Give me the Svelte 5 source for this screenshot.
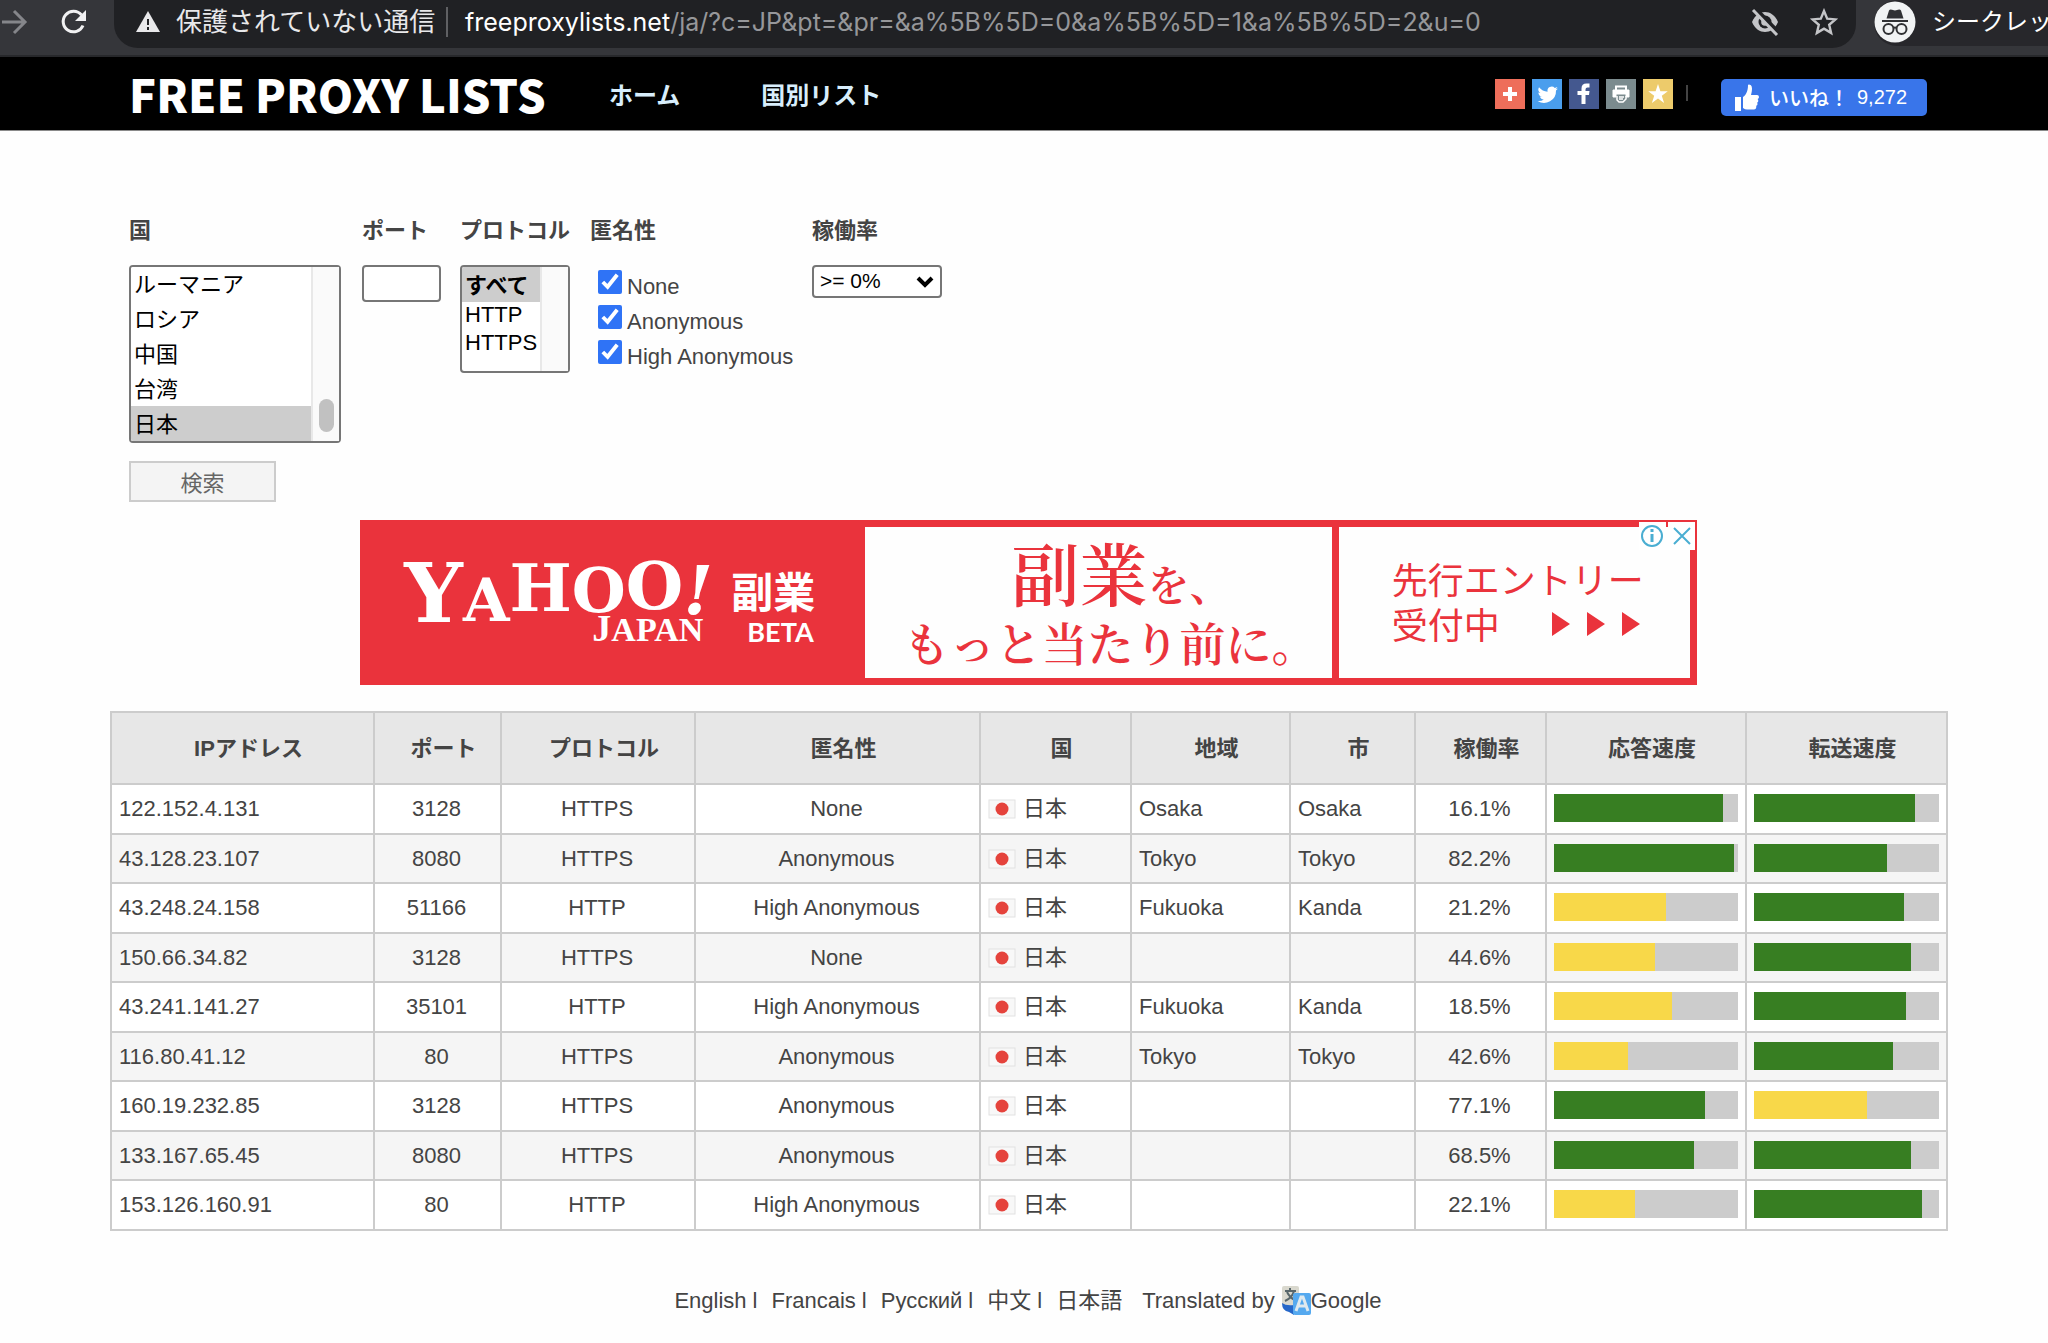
<script>
  import { onMount } from "svelte";

  const countries = [
    "すべて",
    "アメリカ",
    "アルゼンチン",
    "イギリス",
    "イタリア",
    "イラン",
    "インド",
    "インドネシア",
    "ウクライナ",
    "エジプト",
    "オランダ",
    "カナダ",
    "コロンビア",
    "シンガポール",
    "スペイン",
    "タイ",
    "チリ",
    "ドイツ",
    "トルコ",
    "ブラジル",
    "フランス",
    "ベトナム",
    "ルーマニア",
    "ロシア",
    "中国",
    "台湾",
    "日本",
    "韓国"
  ];

  const levels = ["None", "Anonymous", "High Anonymous"];

  const headings = [
    "IPアドレス",
    "ポート",
    "プロトコル",
    "匿名性",
    "国",
    "地域",
    "市",
    "稼働率",
    "応答速度",
    "転送速度"
  ];

  const columns = [263, 127, 194, 285, 151, 159, 125, 131, 200, 201];

  const proxies = [
    { ip: "122.152.4.131", port: 3128, protocol: "HTTPS", level: "None", region: "Osaka", city: "Osaka", uptime: "16.1%", response: 92, transfer: 87 },
    { ip: "43.128.23.107", port: 8080, protocol: "HTTPS", level: "Anonymous", region: "Tokyo", city: "Tokyo", uptime: "82.2%", response: 98, transfer: 72 },
    { ip: "43.248.24.158", port: 51166, protocol: "HTTP", level: "High Anonymous", region: "Fukuoka", city: "Kanda", uptime: "21.2%", response: 61, transfer: 81 },
    { ip: "150.66.34.82", port: 3128, protocol: "HTTPS", level: "None", region: "", city: "", uptime: "44.6%", response: 55, transfer: 85 },
    { ip: "43.241.141.27", port: 35101, protocol: "HTTP", level: "High Anonymous", region: "Fukuoka", city: "Kanda", uptime: "18.5%", response: 64, transfer: 82 },
    { ip: "116.80.41.12", port: 80, protocol: "HTTPS", level: "Anonymous", region: "Tokyo", city: "Tokyo", uptime: "42.6%", response: 40, transfer: 75 },
    { ip: "160.19.232.85", port: 3128, protocol: "HTTPS", level: "Anonymous", region: "", city: "", uptime: "77.1%", response: 82, transfer: 61 },
    { ip: "133.167.65.45", port: 8080, protocol: "HTTPS", level: "Anonymous", region: "", city: "", uptime: "68.5%", response: 76, transfer: 85 },
    { ip: "153.126.160.91", port: 80, protocol: "HTTP", level: "High Anonymous", region: "", city: "", uptime: "22.1%", response: 44, transfer: 91 }
  ];

  const languages = ["English", "Francais", "Русский", "中文", "日本語"];

  let countryList;
  let country = ["日本"];
  let protocol = [""];
  let checked = [...levels];

  // keep the chosen country on the last visible line
  onMount(() => {
    const rowHeight = 35;
    countryList.scrollTop = (countries.indexOf("日本") - 4) * rowHeight;
  });
</script>

<div class="browser">
  <button class="tool forward" type="button" aria-label="進む">
    <svg width="28" height="28" viewBox="0 0 28 28">
      <path d="M2 14h22M14 3l11 11-11 11" fill="none" stroke="#85868a" stroke-width="3" />
    </svg>
  </button>
  <button class="tool reload" type="button" aria-label="再読み込み">
    <svg width="28" height="28" viewBox="0 0 28 28">
      <path d="M23 17.500A10.300 10.300 0 1 1 21.500 7" fill="none" stroke="#f1f1f2" stroke-width="3" />
      <path d="M26 2v11H15z" fill="#f1f1f2" />
    </svg>
  </button>
  <div class="address">
    <svg class="warning" width="24" height="22" viewBox="0 0 24 22">
      <path d="M12 0l12 21H0z" fill="#e8e8ea" />
      <path d="M12 8v6M12 16v3" stroke="#202124" stroke-width="2" />
    </svg>
    <span class="insecure">保護されていない通信</span>
    <span class="url"><b>freeproxylists.net</b>/ja/?c=JP&pt=&pr=&a%5B%5D=0&a%5B%5D=1&a%5B%5D=2&u=0</span>
    <svg class="eye" width="28" height="28" viewBox="0 0 28 28">
      <path d="M1 14C4 7 9 4 14 4s10 3 13 10c-3 7-8 10-13 10S4 21 1 14z" fill="#c4c5c8" />
      <circle cx="14" cy="14" r="6.500" fill="#202124" />
      <circle cx="14" cy="14" r="3.800" fill="#c4c5c8" />
      <path d="M4 0l24 25" stroke="#202124" stroke-width="4" />
      <path d="M2 2l24 25" stroke="#c4c5c8" stroke-width="3" />
    </svg>
    <svg width="28" height="28" viewBox="0 0 28 28">
      <path d="M14 3l3.200 7.700 8.300.700-6.300 5.400 1.900 8.100-7.100-4.300-7.100 4.300 1.900-8.100-6.300-5.400 8.300-.700z" fill="none" stroke="#c4c5c8" stroke-width="2.400" />
    </svg>
  </div>
  <div class="profile">
    <svg width="42" height="42" viewBox="0 0 42 42">
      <circle cx="21" cy="21" r="20.500" fill="#f1f3f4" />
      <path d="M15 9.500q1-1.500 3-.700l3 .700 3-.700q2-.800 3 .700l2.500 8h-17z" fill="#303134" />
      <path d="M8 20h26" stroke="#303134" stroke-width="2" />
      <g fill="none" stroke="#303134" stroke-width="2">
        <circle cx="14.500" cy="28" r="5" />
        <circle cx="27.500" cy="28" r="5" />
        <path d="M19.500 27q1.500-1 3 0" />
      </g>
    </svg>
    <span>シークレット</span>
  </div>
</div>

<header>
  <a class="logo" href="/ja/">FREE PROXY LISTS</a>
  <nav>
    <a href="/ja/">ホーム</a>
    <a href="/ja/countries">国別リスト</a>
  </nav>
  <div class="share">
    <a class="more" href="/share" aria-label="共有">
      <svg viewBox="0 0 30 30"><path d="M15 8v14M8 15h14" stroke="#fff" stroke-width="4" /></svg>
    </a>
    <a class="twitter" href="/twitter" aria-label="Twitter">
      <svg viewBox="0 0 30 30">
        <path d="M26 9.500a9 9 0 0 1-2.400.700 4 4 0 0 0 1.800-2.300 8 8 0 0 1-2.600 1 4.200 4.200 0 0 0-7.200 3.800A12 12 0 0 1 7 8.300a4.200 4.200 0 0 0 1.300 5.600 4 4 0 0 1-1.900-.5c0 2 1.400 3.800 3.400 4.200q-1 .2-1.900 0a4.200 4.200 0 0 0 3.900 2.900A8.500 8.500 0 0 1 5.600 22a12 12 0 0 0 18.400-10.600 8 8 0 0 0 2-1.900z" fill="#fff" />
      </svg>
    </a>
    <a class="facebook" href="/facebook" aria-label="Facebook">
      <svg viewBox="0 0 30 30">
        <path d="M12.500 25v-9H8.500v-4h4V9.500q0-5 5-5h3v4h-2q-2 0-2 2V12h4l-.5 4h-3.500v9z" fill="#fff" />
      </svg>
    </a>
    <a class="print" href="/print" aria-label="印刷">
      <svg viewBox="0 0 30 30" fill="none" stroke="#fff" stroke-width="2">
        <path d="M10 11V7.500h10V11" />
        <path d="M7 11h16v7h-3v-3H10v3H7z" fill="#fff" stroke-width="1" />
        <path d="M11 17v4l2 2h4l3-3v-3M13 18h5M13 20h4" stroke-width="1.500" />
      </svg>
    </a>
    <a class="favorite" href="/favorite" aria-label="お気に入り">
      <svg viewBox="0 0 30 30">
        <path d="M15 5l2.400 7.200h7.400l-6 4.500 2.300 7.300-6.100-4.500L8.900 24l2.300-7.300-6-4.500h7.400z" fill="#fff" />
      </svg>
    </a>
  </div>
  <button class="like" type="button">
    <svg width="24" height="28" viewBox="0 0 24 28" fill="#fff">
      <path d="M0 13h6v14H0zM8 13c3-2 5-6 5-12 0-1 4-1 4 3.500 0 2.500-.5 4.500-1 6.500h6c2.500 0 2.500 3.500.5 4 1.200.8 1 3.200-.5 3.600.9 1.200.4 3-.8 3.200.4 2-.4 3.700-2.200 3.700H12q-2 0-4-1.500z" />
    </svg>
    <span>いいね！</span>
    <span>9,272</span>
  </button>
</header>

<main>
  <form on:submit|preventDefault>
    <div class="filters">
      <div class="field country">
        <label for="country">国</label>
        <div class="listbox">
          <select id="country" size="5" multiple bind:this={countryList} bind:value={country}>
            {#each countries as name}
              <option value={name}>{name}</option>
            {/each}
          </select>
          <div class="scrollbar"><i></i></div>
        </div>
      </div>
      <div class="field port">
        <label for="port">ポート</label>
        <input id="port" type="text" />
      </div>
      <div class="field protocol">
        <label for="protocol">プロトコル</label>
        <div class="listbox">
          <select id="protocol" size="4" multiple bind:value={protocol}>
            <option class="all" value="">すべて</option>
            <option value="HTTP">HTTP</option>
            <option value="HTTPS">HTTPS</option>
          </select>
          <div class="scrollbar"></div>
        </div>
      </div>
      <fieldset class="field level">
        <legend>匿名性</legend>
        {#each levels as level}
          <label>
            <input type="checkbox" value={level} bind:group={checked} />
            <span>{level}</span>
          </label>
        {/each}
      </fieldset>
      <div class="field uptime">
        <label for="uptime">稼働率</label>
        <select id="uptime">
          <option>&gt;= 0%</option>
          <option>&gt;= 50%</option>
          <option>&gt;= 90%</option>
        </select>
      </div>
    </div>
    <button class="search" type="submit">検索</button>
  </form>

  <section class="banner">
    <svg class="yahoo" viewBox="0 0 503 165" fill="#fff">
      <text class="serif" x="43" y="102">
        <tspan font-size="82">Y</tspan><tspan y="101" font-size="60">A</tspan><tspan y="91" font-size="66">H</tspan><tspan y="92" font-size="62">O</tspan><tspan y="89" font-size="66">O</tspan><tspan y="94" font-size="68" font-style="italic">!</tspan>
      </text>
      <text class="japan" x="231" y="121">
        <tspan font-size="38">J</tspan><tspan font-size="34">APAN</tspan>
      </text>
      <text class="sans" x="370" y="88" font-size="42">副業</text>
      <text class="sans" x="386" y="122" font-size="27">BETA</text>
    </svg>
    <div class="panel copy">
      <p class="first"><span>副業</span>を、</p>
      <p class="second">もっと当たり前に。</p>
    </div>
    <div class="panel entry">
      <p>先行エントリー</p>
      <p>
        受付中
        <svg width="88" height="24" viewBox="0 0 88 24" fill="#ea333c">
          <path d="M0 0l18 12L0 24zM35 0l18 12-18 12zM70 0l18 12-18 12z" />
        </svg>
      </p>
    </div>
    <div class="adchoices">
      <svg width="56" height="28" viewBox="0 0 56 28" fill="none" stroke="#4aaed2" stroke-width="2">
        <path d="M28 0v5" stroke="#ea333c" />
        <circle cx="13" cy="14" r="10" />
        <path d="M13 12v8M13 7v3" stroke-width="3" />
        <path d="M35 6l16 16M51 6L35 22" />
      </svg>
    </div>
  </section>

  <table>
    <colgroup>
      {#each columns as width}
        <col style="width: {width}px" />
      {/each}
    </colgroup>
    <thead>
      <tr>
        {#each headings as heading}
          <th scope="col">{heading}</th>
        {/each}
      </tr>
    </thead>
    <tbody>
      {#each proxies as proxy}
        <tr>
          <td>{proxy.ip}</td>
          <td class="center">{proxy.port}</td>
          <td class="center">{proxy.protocol}</td>
          <td class="center">{proxy.level}</td>
          <td>
            <div class="nation">
              <svg width="28" height="20" viewBox="0 0 28 20">
                <rect x="1" y="1" width="26" height="18" fill="#f8f8f8" stroke="#e2e2e2" />
                <circle cx="14" cy="10" r="6.500" fill="#e5433c" />
              </svg>
              日本
            </div>
          </td>
          <td>{proxy.region}</td>
          <td>{proxy.city}</td>
          <td class="center">{proxy.uptime}</td>
          {#each [proxy.response, proxy.transfer] as speed}
            <td>
              <div class="bar">
                <div class:slow={speed < 70} style="width: {speed}%"></div>
              </div>
            </td>
          {/each}
        </tr>
      {/each}
    </tbody>
  </table>
</main>

<footer>
  {#each languages as language, i}
    <a href="/{i}">{language}</a>
    {#if i < languages.length - 1}<span class="separator">l</span>{/if}
  {/each}
  <span class="translated">Translated by</span>
  <svg width="30" height="30" viewBox="0 0 30 30">
    <rect x="1" y="0" width="17" height="20" rx="2" fill="#d9d8ce" />
    <path d="M4 5h11M9 2v3M13 5q-2 7-9 10M6 6q3 6 8 8" fill="none" stroke="#58666b" stroke-width="2" />
    <path d="M1 17q4 3 12 2v10L8 26q-7-1-7-9z" fill="#2667c9" />
    <rect x="12" y="7" width="18" height="22" rx="2" fill="#55a9ef" />
    <path d="M15 25l5-14h2l5 14M17 20h8" fill="none" stroke="#dfe9ee" stroke-width="3" />
  </svg>
  <a href="/google">Google</a>
</footer>

<style>
  :global(body) {
    margin: 0;
    background-color: #fefefe;
    color: #444;
    font-family: "Liberation Sans", "Noto Sans CJK JP", sans-serif;
    font-size: 22px;
    overflow-x: hidden;
  }
  * {
    box-sizing: border-box;
  }
  a {
    color: inherit;
    text-decoration: none;
  }
  p {
    margin: 0;
  }
  svg {
    display: block;
    flex: none;
  }
  button,
  input,
  select {
    font: inherit;
    margin: 0;
  }

  .browser {
    display: flex;
    height: 57px;
    background-color: #35363a;
    border-bottom: 2px solid #27282b;
    font-family: Inter, "Noto Sans CJK JP", sans-serif;
    font-size: 25px;
    overflow: hidden;
    white-space: nowrap;
  }
  .tool {
    display: flex;
    height: 44px;
    align-items: center;
    padding: 0;
    border: none;
    background: none;
  }
  .reload {
    margin: 0 26px 0 32px;
  }
  .address {
    flex: 1;
    display: flex;
    align-items: center;
    height: 48px;
    padding: 0 18px 4px 22px;
    background-color: #202124;
    border-radius: 0 0 24px 24px;
  }
  .insecure {
    width: 255px;
    color: #e8e8ea;
    font-size: 26px;
    line-height: 30px;
    margin: 0 15px 0 16px;
  }
  .url {
    flex: 1;
    padding-left: 17px;
    border-left: 2px solid #5f6063;
    line-height: 30px;
    color: #96979a;
  }
  .url b {
    color: #fff;
    font-weight: 400;
  }
  .eye {
    margin-right: 31px;
  }
  .profile {
    display: flex;
    align-items: center;
    gap: 16px;
    width: 174px;
    height: 46px;
    margin-left: 18px;
    padding-bottom: 2px;
    border-radius: 23px 0 0 23px;
    background-color: #27272b;
    color: #fff;
    font-size: 24px;
    line-height: 30px;
  }

  header {
    display: flex;
    align-items: center;
    height: 74px;
    padding: 0 121px 0 129px;
    background-color: #000;
    border-bottom: 1px solid #8a8a8a;
  }
  .logo {
    width: 480px;
    color: #fff;
    font-family: "Noto Sans CJK JP", sans-serif;
    font-size: 45px;
    font-weight: 900;
    line-height: 68px;
    white-space: nowrap;
  }
  nav {
    flex: 1;
    display: flex;
    gap: 81px;
    color: #d8eefc;
    font-size: 24px;
    font-weight: 700;
  }
  .share {
    display: flex;
    gap: 7px;
    padding-right: 15px;
    background: linear-gradient(#444, #444) right 6px / 2px 16px no-repeat;
  }
  .share a {
    width: 30px;
    height: 30px;
  }
  .more {
    background-color: #ee6e5a;
  }
  .twitter {
    background-color: #4a9eed;
  }
  .facebook {
    background-color: #44588f;
  }
  .print {
    background-color: #7b8b8e;
  }
  .favorite {
    background-color: #edcb6b;
  }
  .like {
    display: flex;
    align-items: center;
    gap: 10px;
    width: 206px;
    height: 37px;
    margin-left: 33px;
    margin-top: 8px;
    padding: 0 14px;
    border: none;
    border-radius: 5px;
    background-color: #3975ea;
    color: #fff;
    font-size: 20px;
    white-space: nowrap;
  }
  .like span:first-of-type {
    width: 78px;
    font-weight: 500;
  }

  main {
    padding: 82px 102px 0 110px;
  }
  form {
    padding-left: 19px;
  }
  .filters {
    display: flex;
    align-items: flex-start;
  }
  .field {
    display: flex;
    flex-direction: column;
    align-items: flex-start;
    margin: 0;
    padding: 0;
    border: none;
  }
  .field > label:first-child,
  legend {
    height: 35px;
    margin-bottom: 17px;
    padding: 0;
    font-weight: 700;
    line-height: 35px;
  }
  .field select,
  .port input {
    border: 2px solid #767676;
    border-radius: 4px;
    background-color: #fff;
    color: #000;
  }
  .country {
    width: 233px;
  }
  .country select {
    width: 212px;
    height: 178px;
  }
  .port {
    width: 98px;
  }
  .port input {
    width: 79px;
    height: 37px;
  }
  .protocol {
    width: 130px;
  }
  .protocol select {
    width: 110px;
    height: 108px;
  }
  select[multiple] {
    display: block;
    padding: 0;
    overflow-y: scroll;
    scrollbar-width: none;
  }
  select[multiple] option {
    display: block;
    height: 35px;
    padding: 0 3px;
    line-height: 33px;
  }
  .protocol select option:not(.all) {
    height: 28px;
    line-height: 26px;
  }
  .protocol .all {
    font-weight: 700;
  }
  select[multiple] option:checked {
    background: linear-gradient(#cdcdcd, #cdcdcd);
    color: #000;
  }
  .listbox {
    position: relative;
  }
  .scrollbar {
    position: absolute;
    top: 2px;
    right: 2px;
    bottom: 2px;
    width: 28px;
    background-color: #fafafa;
    border-left: 2px solid #e8e8e8;
    pointer-events: none;
  }
  .scrollbar i {
    position: absolute;
    right: 5px;
    bottom: 9px;
    width: 15px;
    height: 33px;
    border-radius: 8px;
    background-color: #c1c1c1;
  }
  .level {
    display: block;
    width: 222px;
  }
  .level label {
    display: flex;
    gap: 5px;
    height: 35px;
    padding: 5px 0 0 8px;
  }
  .level input {
    width: 24px;
    height: 24px;
    accent-color: #2f73f6;
  }
  .level span {
    line-height: 34px;
    white-space: nowrap;
  }
  .uptime select {
    width: 130px;
    height: 33px;
    padding: 0 6px 2px;
    appearance: none;
    background: #fff
      url("data:image/svg+xml,%3Csvg xmlns='http://www.w3.org/2000/svg' viewBox='0 0 18 12'%3E%3Cpath d='M2 2l7 7 7-7' fill='none' stroke='black' stroke-width='4'/%3E%3C/svg%3E")
      right 6px center / 18px 12px no-repeat;
    font-size: 21px;
  }
  .search {
    width: 147px;
    height: 41px;
    margin-top: 18px;
    padding: 0 0 2px;
    border: 2px solid #ccc;
    background-color: #f4f4f4;
    color: #666;
  }

  .banner {
    position: relative;
    display: grid;
    grid-template-columns: minmax(0, 503fr) minmax(0, 471fr) minmax(0, 349fr);
    max-width: 1337px;
    height: 165px;
    margin: 18px auto 26px;
    padding-right: 7px;
    background-color: #ea333c;
    color: #ea333c;
    font-family: "Noto Serif CJK JP", "Noto Sans CJK JP", serif;
    white-space: nowrap;
  }
  .yahoo {
    width: 100%;
    height: 165px;
  }
  .serif {
    font-family: "DejaVu Serif", serif;
    font-weight: 700;
  }
  .japan {
    font-family: "Liberation Serif", serif;
    font-weight: 700;
  }
  .sans {
    font-family: Lato, "Noto Sans CJK JP", sans-serif;
    font-weight: 700;
  }
  .panel {
    margin: 7px 0;
    background-color: #fefefe;
  }
  .copy {
    margin-right: 7px;
    text-align: center;
  }
  .first {
    padding: 9px 0 0 46px;
    font-size: 42px;
    font-weight: 600;
    line-height: 72px;
  }
  .first span {
    font-size: 68px;
  }
  .second {
    padding-left: 24px;
    font-size: 46px;
    font-weight: 600;
    line-height: 44px;
  }
  .entry {
    padding: 29px 0 0 53px;
    font-family: "Noto Sans CJK JP", sans-serif;
    font-size: 36px;
    line-height: 45px;
  }
  .entry p {
    display: flex;
    align-items: center;
    gap: 52px;
  }
  .adchoices {
    position: absolute;
    top: 2px;
    right: 2px;
    background-color: #fff;
  }

  table {
    width: 100%;
    table-layout: fixed;
    border-collapse: collapse;
  }
  th,
  td {
    border: 2px solid #ccc;
    padding: 0 7px;
    line-height: 28px;
    text-align: left;
    white-space: nowrap;
  }
  th {
    height: 72px;
    padding: 2px 0 0 12px;
    background-color: #e7e7e7;
    text-align: center;
  }
  tbody tr {
    height: 50px;
    background-color: #fff;
  }
  tbody tr:nth-child(even) {
    height: 49px;
    background-color: #f5f5f5;
  }
  .center {
    padding-right: 9px;
    text-align: center;
  }
  .nation {
    display: flex;
    align-items: center;
    gap: 7px;
  }
  .bar {
    height: 28px;
    margin-bottom: 2px;
    background-color: #ccc;
  }
  .bar div {
    height: 100%;
    background-color: #377e22;
  }
  .bar .slow {
    background-color: #f8d849;
  }

  footer {
    display: flex;
    justify-content: center;
    align-items: center;
    padding: 52px 0 24px 8px;
    line-height: 36px;
    white-space: nowrap;
  }
  .separator {
    margin: 0 14px 0 6px;
  }
  .translated {
    margin: 0 6px 0 20px;
  }
</style>
